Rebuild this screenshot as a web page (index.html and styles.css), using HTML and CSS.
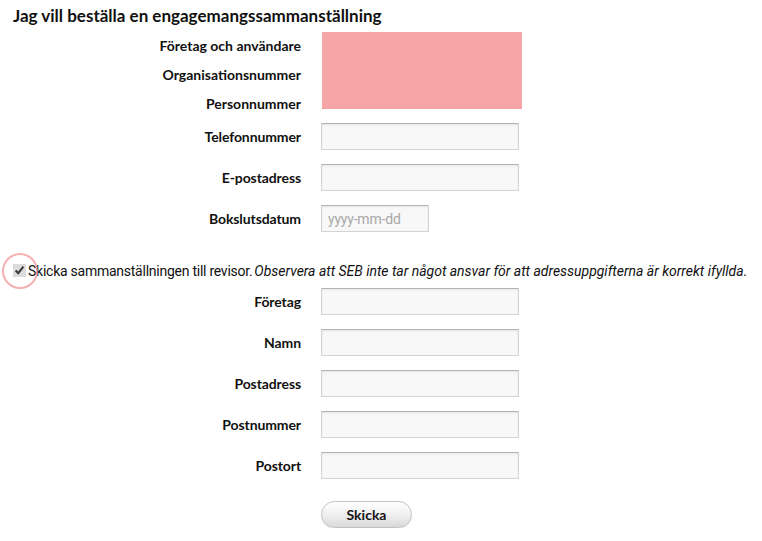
FILE: index.html
```html
<!DOCTYPE html>
<html lang="sv">
<head>
<meta charset="utf-8">
<title>Engagemangssammanställning</title>
<link rel="stylesheet" href="styles.css">
</head>
<body>
<div class="page">
  <h1 class="title">Jag vill beställa en engagemangssammanställning</h1>
  <div class="info">
    <div class="info-label r1">Företag och användare</div>
    <div class="info-label r2">Organisationsnummer</div>
    <div class="info-label r3">Personnummer</div>
    <div class="redact"></div>
  </div>
  <div class="row"><label class="label">Telefonnummer</label><input class="field" type="text"></div>
  <div class="row"><label class="label">E-postadress</label><input class="field" type="text"></div>
  <div class="row"><label class="label">Bokslutsdatum</label><input class="field short" type="text" placeholder="yyyy-mm-dd"></div>
  <div class="check-row">
    <span class="check-wrap"><input class="check" type="checkbox" checked><span class="ring"></span></span>
    <span class="check-text">Skicka sammanställningen till revisor.</span><em class="note">Observera att SEB inte tar något ansvar för att adressuppgifterna är korrekt ifyllda.</em>
  </div>
  <div class="row"><label class="label">Företag</label><input class="field" type="text"></div>
  <div class="row"><label class="label">Namn</label><input class="field" type="text"></div>
  <div class="row"><label class="label">Postadress</label><input class="field" type="text"></div>
  <div class="row"><label class="label">Postnummer</label><input class="field" type="text"></div>
  <div class="row"><label class="label">Postort</label><input class="field" type="text"></div>
  <div class="actions"><button class="submit" type="button">Skicka</button></div>
</div>
</body>
</html>
```
FILE: styles.css
```css
html, body {
  margin: 0;
  padding: 0;
  background: #ffffff;
}
.page {
  padding: 0 13px;
  font-family: Lato, "Noto Sans", sans-serif;
  color: #111111;
}
.title {
  margin: 0;
  padding-top: 5px;
  font-size: 17px;
  font-weight: 700;
  line-height: 22px;
  height: 26px;
}
.info {
  display: grid;
  grid-template-columns: 288px 200px;
  grid-template-rows: 29px 29px 29px;
  column-gap: 21px;
}
.info-label {
  grid-column: 1;
  text-align: right;
  font-weight: 700;
  font-size: 14px;
  line-height: 29px;
}
.r1 { grid-row: 1; }
.r2 { grid-row: 2; }
.r3 { grid-row: 3; }
.redact {
  grid-column: 2;
  grid-row: 1 / 4;
  align-self: start;
  margin-top: 1px;
  height: 77px;
  background: #f6a5a6;
}
.row {
  display: flex;
  align-items: center;
  gap: 20px;
  height: 41px;
}
.info + .row { margin-top: -2px; }
.label {
  width: 288px;
  text-align: right;
  font-weight: 700;
  font-size: 14px;
  letter-spacing: -0.1px;
}
.field {
  box-sizing: border-box;
  width: 198px;
  height: 27px;
  margin: 0;
  padding: 2px 6px;
  border: 1px solid #d4d4d4;
  border-top-color: #b4b4b4;
  border-radius: 1px;
  background: #f8f8f8;
  box-shadow: inset 0 1px 2px rgba(0,0,0,0.08);
  font-family: Roboto, "Liberation Sans", sans-serif;
  font-size: 14px;
  color: #333;
}
.field.short { width: 108px; }
.field::placeholder {
  color: #a9a9a9;
  letter-spacing: -0.2px;
}
.check-row {
  display: flex;
  align-items: center;
  padding-top: 21px;
  height: 21px;
  font-family: Roboto, "Liberation Sans", sans-serif;
  font-size: 14px;
  white-space: nowrap;
}
.check-text { letter-spacing: -0.25px; }
.check-wrap {
  position: relative;
  display: inline-flex;
  width: 14px;
  height: 14px;
  margin-right: 1px;
}
.check {
  margin: 0;
  width: 13px;
  height: 13px;
  accent-color: #dcdcdc;
}
.ring {
  position: absolute;
  left: -11px;
  top: -11px;
  width: 32px;
  height: 32px;
  border: 2px solid rgba(242, 150, 152, 0.75);
  border-radius: 50%;
  pointer-events: none;
}
.note {
  margin-left: 2px;
  font-style: italic;
  letter-spacing: -0.02px;
}
.actions {
  padding-left: 308px;
  padding-top: 15px;
}
.submit {
  box-sizing: border-box;
  width: 91px;
  height: 27px;
  border: 1px solid #c2c2c2;
  border-radius: 14px;
  background: linear-gradient(#ffffff, #f0f0f0 50%, #d9d9d9);
  box-shadow: 0 1px 1px rgba(0,0,0,0.1);
  font-family: Lato, "Noto Sans", sans-serif;
  font-weight: 700;
  font-size: 14px;
  color: #141414;
  padding: 0;
}
```
